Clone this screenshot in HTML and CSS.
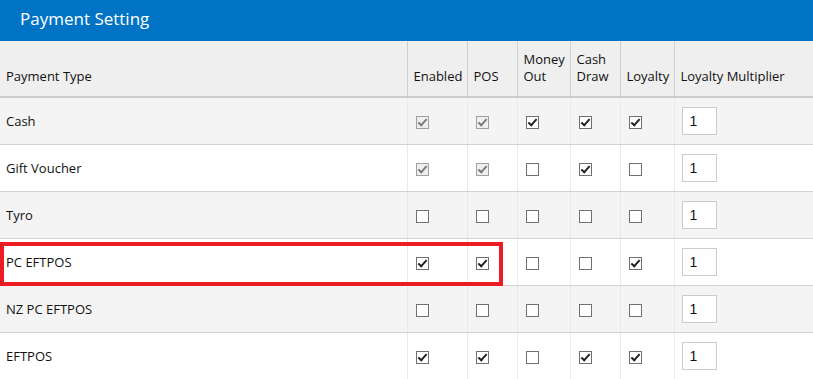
FILE: index.html
```html
<!DOCTYPE html>
<html>
<head>
<meta charset="utf-8">
<link rel="stylesheet" href="styles.css">
</head>
<body>
<div class="panel">
  <div class="title">Payment Setting</div>
  <div class="table-wrap">
    <table class="grid">
      <colgroup>
        <col class="c-type"><col class="c-en"><col class="c-pos"><col class="c-mo"><col class="c-cd"><col class="c-loy"><col class="c-mul">
      </colgroup>
      <thead>
        <tr>
          <th>Payment Type</th>
          <th>Enabled</th>
          <th>POS</th>
          <th>Money<br>Out</th>
          <th>Cash<br>Draw</th>
          <th>Loyalty</th>
          <th>Loyalty Multiplier</th>
        </tr>
      </thead>
      <tbody>
        <tr class="alt">
          <td>Cash</td>
          <td><span class="cb dis on"></span></td>
          <td><span class="cb dis on"></span></td>
          <td><span class="cb on"></span></td>
          <td><span class="cb on"></span></td>
          <td><span class="cb on"></span></td>
          <td><span class="num">1</span></td>
        </tr>
        <tr>
          <td>Gift Voucher</td>
          <td><span class="cb dis on"></span></td>
          <td><span class="cb dis on"></span></td>
          <td><span class="cb"></span></td>
          <td><span class="cb on"></span></td>
          <td><span class="cb"></span></td>
          <td><span class="num">1</span></td>
        </tr>
        <tr class="alt">
          <td>Tyro</td>
          <td><span class="cb"></span></td>
          <td><span class="cb"></span></td>
          <td><span class="cb"></span></td>
          <td><span class="cb"></span></td>
          <td><span class="cb"></span></td>
          <td><span class="num">1</span></td>
        </tr>
        <tr>
          <td>PC EFTPOS</td>
          <td><span class="cb on"></span></td>
          <td><span class="cb on"></span></td>
          <td><span class="cb"></span></td>
          <td><span class="cb"></span></td>
          <td><span class="cb on"></span></td>
          <td><span class="num">1</span></td>
        </tr>
        <tr class="alt">
          <td>NZ PC EFTPOS</td>
          <td><span class="cb"></span></td>
          <td><span class="cb"></span></td>
          <td><span class="cb"></span></td>
          <td><span class="cb"></span></td>
          <td><span class="cb"></span></td>
          <td><span class="num">1</span></td>
        </tr>
        <tr>
          <td>EFTPOS</td>
          <td><span class="cb on"></span></td>
          <td><span class="cb on"></span></td>
          <td><span class="cb"></span></td>
          <td><span class="cb on"></span></td>
          <td><span class="cb on"></span></td>
          <td><span class="num">1</span></td>
        </tr>
      </tbody>
    </table>
    <div class="highlight"></div>
  </div>
</div>
</body>
</html>
```

FILE: styles.css
```css
html, body {
  margin: 0;
  padding: 0;
  background: #ffffff;
}
body {
  font-family: "Open Sans", "Noto Sans", sans-serif;
  font-size: 13px;
  color: #111111;
  width: 813px;
  height: 379px;
  overflow: hidden;
}
.title {
  background: #0073c5;
  color: #ffffff;
  height: 41px;
  box-sizing: border-box;
  padding: 7px 0 0 20px;
  font-size: 17px;
  line-height: 24px;
}
.table-wrap {
  position: relative;
}
.grid {
  border-collapse: collapse;
  width: 813px;
  table-layout: fixed;
}
.c-type { width: 407px; }
.c-en { width: 60px; }
.c-pos { width: 50px; }
.c-mo { width: 53px; }
.c-cd { width: 50px; }
.c-loy { width: 54px; }
.grid th {
  background: #efefef;
  font-weight: normal;
  text-align: left;
  vertical-align: bottom;
  height: 56px;
  padding: 0 0 11px 6px;
  box-sizing: border-box;
  line-height: 17px;
  border-left: 1px solid #cfcfcf;
  border-bottom: 2px solid #cccccc;
  white-space: nowrap;
}
.grid th:first-child { border-left: none; }
.grid td {
  height: 47px;
  padding: 0 0 0 6px;
  box-sizing: border-box;
  border-left: 1px solid #e9e9f6;
  border-bottom: 1px solid #d3d3d3;
  vertical-align: middle;
}
.grid td:first-child { border-left: none; }
.grid tr.alt td { background: #f4f4f4; }
.grid tr td:not(:first-child) { padding-left: 8px; }
.grid tr td:last-child { padding-left: 7px; }
.cb {
  display: block;
  width: 13px;
  height: 13px;
  box-sizing: border-box;
  border: 1px solid #707070;
  background: #ffffff;
  position: relative;
  margin-top: 3px;
}
.cb.dis {
  border-color: #a0a0a0;
  background: #efefef;
}
.cb.on::after {
  content: "";
  position: absolute;
  left: 3px;
  top: 0px;
  width: 3px;
  height: 7px;
  border-right: 2px solid #222222;
  border-bottom: 2px solid #222222;
  transform: rotate(42deg);
}
.cb.dis.on::after {
  border-color: #7a7a7a;
}
.num {
  display: block;
  width: 35px;
  height: 28px;
  box-sizing: border-box;
  border: 1px solid #cccccc;
  background: #ffffff;
  padding: 3px 0 0 7px;
  line-height: 20px;
  font-family: "Liberation Sans", Arial, sans-serif;
  font-size: 14px;
  color: #111;
}
.highlight {
  position: absolute;
  left: 0;
  top: 201px;
  width: 503px;
  height: 44px;
  box-sizing: border-box;
  border: 4px solid #ec1c24;
  pointer-events: none;
}
```
